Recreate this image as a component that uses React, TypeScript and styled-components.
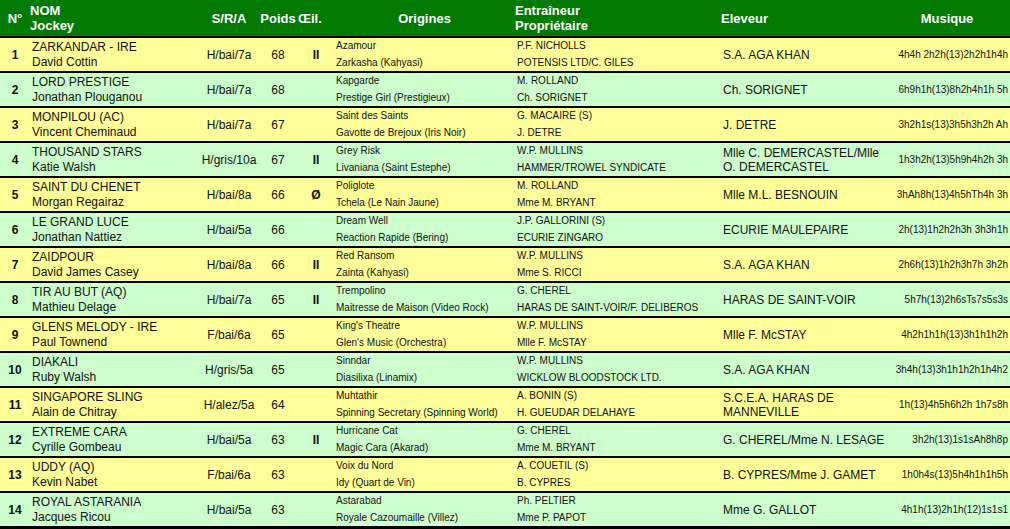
import styled, { createGlobalStyle } from "styled-components";

const Global = createGlobalStyle`
  body { margin: 0; background: #000; font-family: "Liberation Sans", Arial, sans-serif; }
`;

const Grid = styled.div`
  display: grid;
  grid-template-columns: 30px 170px 58px 40px 36px 181px 206px 163px 126px;
  row-gap: 2px;
  width: 1010px;
`;

const Head = styled.div<{ $align?: string }>`
  background: #007a00;
  color: #fff;
  font-weight: bold;
  font-size: 13px;
  height: 36px;
  display: flex;
  align-items: center;
  justify-content: ${(p) => p.$align || "center"};
  line-height: 15px;
`;

const Cell = styled.div<{ $even: boolean; $align?: string; $small?: boolean; $bold?: boolean }>`
  background: ${(p) => (p.$even ? "#ccffcc" : "#ffff99")};
  height: 33px;
  display: flex;
  flex-direction: column;
  justify-content: ${(p) => (p.$small ? "space-around" : "center")};
  align-items: ${(p) => p.$align || "center"};
  font-size: ${(p) => (p.$small ? "10px" : "12px")};
  font-weight: ${(p) => (p.$bold ? "bold" : "normal")};
  line-height: 14px;
  color: #111;
  white-space: nowrap;
  overflow: hidden;
  padding: 0 2px;
`;

const Name = styled.div`
  line-height: 15px;
`;

type Row = [string, string, string, string, string, string, string, string, string, string, string, string];
const rows: Row[] = [
  ["ZARKANDAR - IRE", "David Cottin", "H/bai/7a", "68", "II", "Azamour", "Zarkasha (Kahyasi)", "P.F. NICHOLLS", "POTENSIS LTD/C. GILES", "S.A. AGA KHAN", "", "4h4h 2h2h(13)2h2h1h4h"],
  ["LORD PRESTIGE", "Jonathan Plouganou", "H/bai/7a", "68", "", "Kapgarde", "Prestige Girl (Prestigieux)", "M. ROLLAND", "Ch. SORIGNET", "Ch. SORIGNET", "", "6h9h1h(13)8h2h4h1h 5h"],
  ["MONPILOU (AC)", "Vincent Cheminaud", "H/bai/7a", "67", "", "Saint des Saints", "Gavotte de Brejoux (Iris Noir)", "G. MACAIRE (S)", "J. DETRE", "J. DETRE", "", "3h2h1s(13)3h5h3h2h Ah"],
  ["THOUSAND STARS", "Katie Walsh", "H/gris/10a", "67", "II", "Grey Risk", "Livaniana (Saint Estephe)", "W.P. MULLINS", "HAMMER/TROWEL SYNDICATE", "Mlle C. DEMERCASTEL/Mlle", "O. DEMERCASTEL", "1h3h2h(13)5h9h4h2h 3h"],
  ["SAINT DU CHENET", "Morgan Regairaz", "H/bai/8a", "66", "Ø", "Poliglote", "Tchela (Le Nain Jaune)", "M. ROLLAND", "Mme M. BRYANT", "Mlle M.L. BESNOUIN", "", "3hAh8h(13)4h5hTh4h 3h"],
  ["LE GRAND LUCE", "Jonathan Nattiez", "H/bai/5a", "66", "", "Dream Well", "Reaction Rapide (Bering)", "J.P. GALLORINI (S)", "ECURIE ZINGARO", "ECURIE MAULEPAIRE", "", "2h(13)1h2h2h3h 3h3h1h"],
  ["ZAIDPOUR", "David James Casey", "H/bai/8a", "66", "II", "Red Ransom", "Zainta (Kahyasi)", "W.P. MULLINS", "Mme S. RICCI", "S.A. AGA KHAN", "", "2h6h(13)1h2h3h7h 3h2h"],
  ["TIR AU BUT (AQ)", "Mathieu Delage", "H/bai/7a", "65", "II", "Trempolino", "Maitresse de Maison (Video Rock)", "G. CHEREL", "HARAS DE SAINT-VOIR/F. DELIBEROS", "HARAS DE SAINT-VOIR", "", "5h7h(13)2h6sTs7s5s3s"],
  ["GLENS MELODY - IRE", "Paul Townend", "F/bai/6a", "65", "", "King's Theatre", "Glen's Music (Orchestra)", "W.P. MULLINS", "Mlle F. McSTAY", "Mlle F. McSTAY", "", "4h2h1h1h(13)3h1h1h2h"],
  ["DIAKALI", "Ruby Walsh", "H/gris/5a", "65", "", "Sinndar", "Diasilixa (Linamix)", "W.P. MULLINS", "WICKLOW BLOODSTOCK LTD.", "S.A. AGA KHAN", "", "3h4h(13)3h1h1h2h1h4h2"],
  ["SINGAPORE SLING", "Alain de Chitray", "H/alez/5a", "64", "", "Muhtathir", "Spinning Secretary (Spinning World)", "A. BONIN (S)", "H. GUEUDAR DELAHAYE", "S.C.E.A. HARAS DE", "MANNEVILLE", "1h(13)4h5h6h2h 1h7s8h"],
  ["EXTREME CARA", "Cyrille Gombeau", "H/bai/5a", "63", "II", "Hurricane Cat", "Magic Cara (Akarad)", "G. CHEREL", "Mme M. BRYANT", "G. CHEREL/Mme N. LESAGE", "", "3h2h(13)1s1sAh8h8p"],
  ["UDDY (AQ)", "Kevin Nabet", "F/bai/6a", "63", "", "Voix du Nord", "Idy (Quart de Vin)", "A. COUETIL (S)", "B. CYPRES", "B. CYPRES/Mme J. GAMET", "", "1h0h4s(13)5h4h1h1h5h"],
  ["ROYAL ASTARANIA", "Jacques Ricou", "H/bai/5a", "63", "", "Astarabad", "Royale Cazoumaille (Villez)", "Ph. PELTIER", "Mme P. PAPOT", "Mme G. GALLOT", "", "4h1h(13)2h1h(12)1s1s1"],
];

export default function App() {
  return (
    <>
      <Global />
      <Grid>
        <Head>N°</Head>
        <Head $align="flex-start">
          <Name>NOM<br />Jockey</Name>
        </Head>
        <Head>S/R/A</Head>
        <Head>Poids</Head>
        <Head $align="flex-start">Œil.</Head>
        <Head>Origines</Head>
        <Head $align="flex-start">
          <Name>Entraîneur<br />Propriétaire</Name>
        </Head>
        <Head $align="flex-start">Eleveur</Head>
        <Head>Musique</Head>
        {rows.map((r, i) => {
          const even = i % 2 === 1;
          return [
            <Cell key={`n${i}`} $even={even} $bold>{i + 1}</Cell>,
            <Cell key={`a${i}`} $even={even} $align="flex-start">
              <Name>{r[0]}</Name>
              <Name>{r[1]}</Name>
            </Cell>,
            <Cell key={`s${i}`} $even={even}>{r[2]}</Cell>,
            <Cell key={`p${i}`} $even={even}>{r[3]}</Cell>,
            <Cell key={`o${i}`} $even={even} $bold>{r[4]}</Cell>,
            <Cell key={`g${i}`} $even={even} $small $align="flex-start">
              <div>{r[5]}</div>
              <div>{r[6]}</div>
            </Cell>,
            <Cell key={`e${i}`} $even={even} $small $align="flex-start">
              <div>{r[7]}</div>
              <div>{r[8]}</div>
            </Cell>,
            <Cell key={`l${i}`} $even={even} $align="flex-start">
              <div>{r[9]}</div>
              {r[10] && <div>{r[10]}</div>}
            </Cell>,
            <Cell key={`m${i}`} $even={even} $small $align="flex-end">{r[11]}</Cell>,
          ];
        })}
      </Grid>
    </>
  );
}
